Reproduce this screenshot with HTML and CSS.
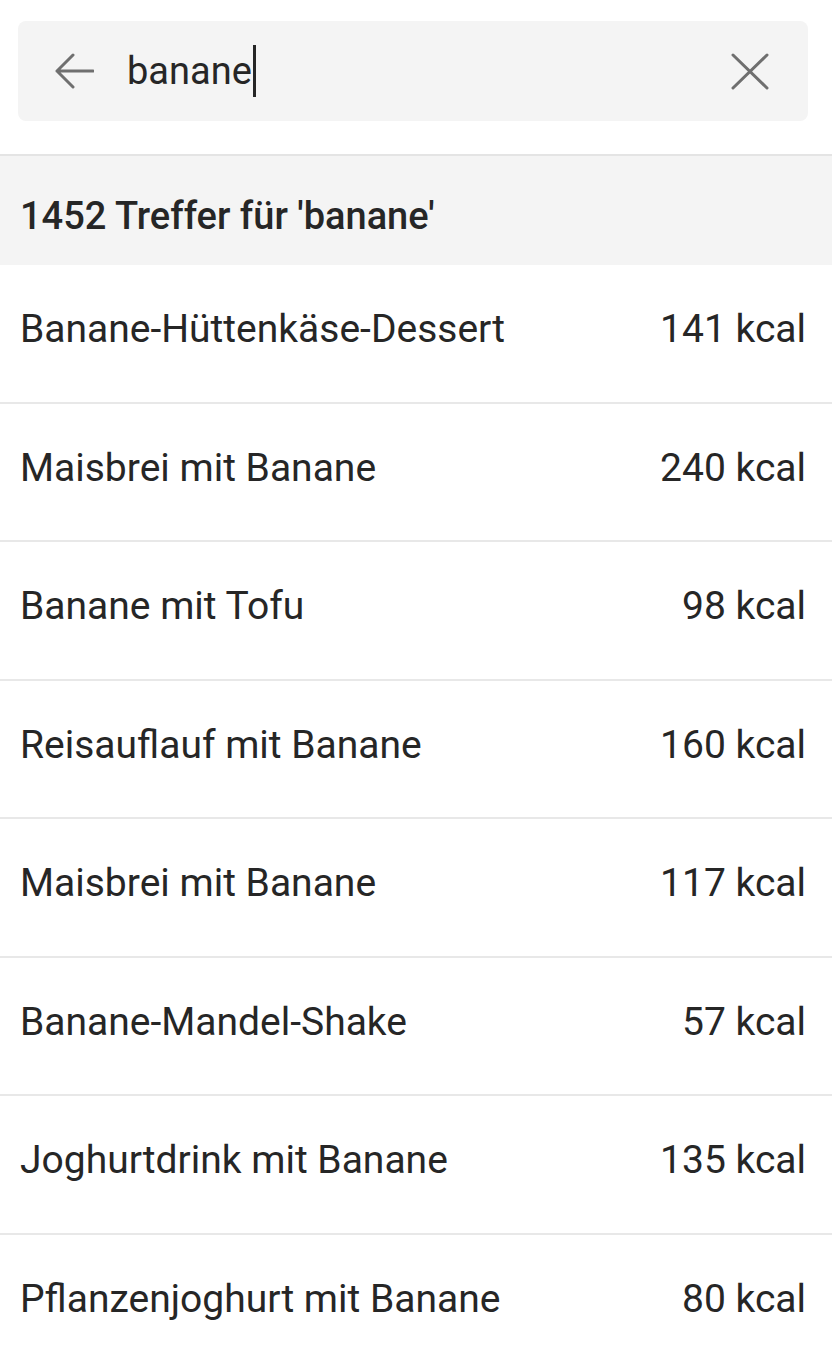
FILE: index.html
```html
<!DOCTYPE html>
<html lang="de">

<head>
    <meta charset="UTF-8">
    <meta name="viewport" content="width=device-width, initial-scale=1.0">
    <title>Suche</title>
    <link rel="stylesheet" href="styles.css">
</head>

<body>
    <div class="search-bar">
        <div class="search-box">
            <svg class="icon" viewBox="0 0 40 40" width="40" height="40">
                <path d="M39 20H3M19 4L3 20l16 16" fill="none" stroke="#6f6f6f" stroke-width="3" stroke-linecap="round" stroke-linejoin="round"/>
            </svg>
            <div class="search-input">banane<span class="caret"></span></div>
            <svg class="icon" viewBox="0 0 40 40" width="40" height="40">
                <path d="M3 4l34 33M37 4L3 37" fill="none" stroke="#6f6f6f" stroke-width="3" stroke-linecap="round"/>
            </svg>
        </div>
    </div>

    <div class="results-header">1452 Treffer für 'banane'</div>

    <ul class="results">
        <li class="result"><span>Banane-Hüttenkäse-Dessert</span><span>141 kcal</span></li>
        <li class="result"><span>Maisbrei mit Banane</span><span>240 kcal</span></li>
        <li class="result"><span>Banane mit Tofu</span><span>98 kcal</span></li>
        <li class="result"><span>Reisauflauf mit Banane</span><span>160 kcal</span></li>
        <li class="result"><span>Maisbrei mit Banane</span><span>117 kcal</span></li>
        <li class="result"><span>Banane-Mandel-Shake</span><span>57 kcal</span></li>
        <li class="result"><span>Joghurtdrink mit Banane</span><span>135 kcal</span></li>
        <li class="result"><span>Pflanzenjoghurt mit Banane</span><span>80 kcal</span></li>
    </ul>
</body>

</html>
```

FILE: styles.css
```css
body {
    font-family: Roboto, "Noto Sans", sans-serif;
    margin: 0;
    background-color: #ffffff;
    color: #262626;
    overflow: hidden;
}

.search-bar {
    padding: 21px 24px 33px 18px;
    border-bottom: 2px solid #e4e4e4;
}

.search-box {
    display: flex;
    align-items: center;
    height: 100px;
    padding: 0 38px 0 36px;
    background-color: #f4f4f4;
    border-radius: 8px;
}

.icon {
    flex: none;
}

.search-input {
    flex: 1;
    display: flex;
    align-items: center;
    margin-left: 33px;
    font-size: 38px;
    line-height: 1;
}

.caret {
    display: inline-block;
    width: 3px;
    height: 52px;
    margin-left: 1px;
    background-color: #262626;
}

.results-header {
    height: 109px;
    display: flex;
    align-items: center;
    padding: 10px 20px 0;
    box-sizing: border-box;
    background-color: #f4f4f4;
    font-size: 38px;
    font-weight: 500;
}

.results {
    list-style: none;
    margin: 0;
    padding: 0;
}

.result {
    display: flex;
    justify-content: space-between;
    align-items: center;
    height: 128.5px;
    padding: 0 26px 8px 20px;
    font-size: 39px;
    border-bottom: 2px solid #e8e8e8;
}
```
